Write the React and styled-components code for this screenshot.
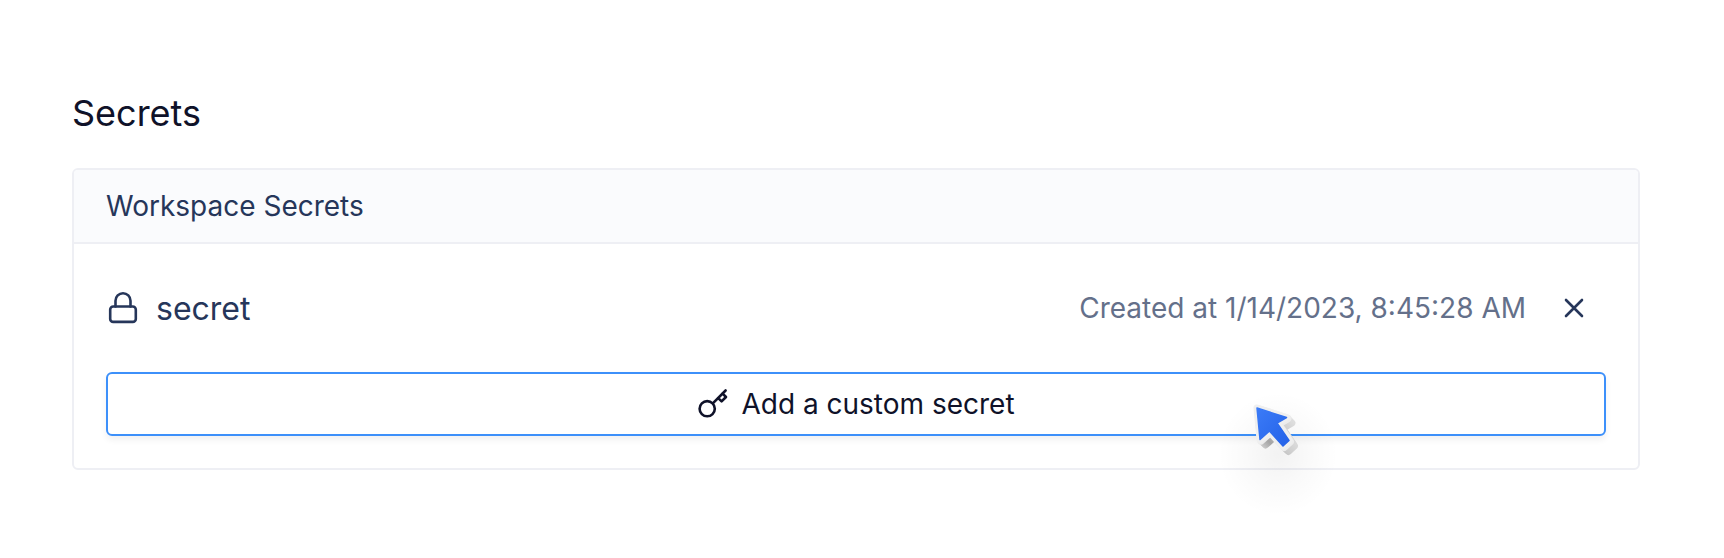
import React from 'react';
import styled, { createGlobalStyle } from 'styled-components';

const secrets = [
  {
    id: 1,
    name: 'secret',
    createdAt: '1/14/2023, 8:45:28 AM',
  },
];

const GlobalStyle = createGlobalStyle`
  * {
    box-sizing: border-box;
  }
  body {
    margin: 0;
    background: #ffffff;
    color: #26365a;
    font-family: Inter, sans-serif;
  }
`;

const Page = styled.main`
  padding: 91px 84px 88px 72px;
`;

const Title = styled.h1`
  margin: 0 0 33px;
  font-size: 36px;
  line-height: 44px;
  font-weight: 400;
  color: #0f1229;
`;

const Card = styled.section`
  border: 2px solid #eeeff4;
  border-radius: 6px;
`;

const CardHeader = styled.h2`
  margin: 0;
  padding: 20px 32px;
  border-bottom: 2px solid #eeeff4;
  border-radius: 4px 4px 0 0;
  background: #fafbfd;
  font-size: 28px;
  line-height: 32px;
  font-weight: 400;
`;

const CardBody = styled.div`
  padding: 32px;
`;

const SecretList = styled.ul`
  margin: 0 0 32px;
  padding: 0;
  list-style: none;
`;

const SecretRow = styled.li`
  display: flex;
  align-items: center;
  gap: 16px;
  height: 64px;
`;

const SecretName = styled.span`
  flex: 1;
  font-size: 32px;
`;

const CreatedAt = styled.span`
  font-size: 28px;
  color: #64708a;
`;

const RemoveButton = styled.button`
  display: flex;
  align-items: center;
  justify-content: center;
  width: 64px;
  height: 64px;
  padding: 0;
  border: 0;
  background: none;
  color: inherit;
  cursor: pointer;
`;

const ButtonWrap = styled.div`
  position: relative;
`;

const AddButton = styled.button`
  display: flex;
  align-items: center;
  justify-content: center;
  gap: 12px;
  width: 100%;
  height: 64px;
  border: 2px solid #3d90fa;
  border-radius: 6px;
  background: #ffffff;
  box-shadow: 0 4px 6px rgba(15, 18, 41, 0.06);
  color: #0f1229;
  font: 400 28px Inter, sans-serif;
  cursor: pointer;
`;

const Icon = styled.svg`
  flex: none;
  width: ${(props) => props.$size}px;
  height: ${(props) => props.$size}px;
  fill: none;
  stroke: currentColor;
  stroke-width: 2.6;
  stroke-linecap: round;
  stroke-linejoin: round;
`;

const Pointer = styled.svg`
  position: absolute;
  top: 0;
  left: 72%;
  width: 160px;
  height: 160px;
  pointer-events: none;
`;

function LockIcon() {
  return (
    <Icon $size={34} viewBox="0 0 34 34" aria-hidden="true">
      <rect x="4.2" y="15.5" width="25.6" height="15.4" rx="3" />
      <path d="M9.5 15.5V9.7a7.5 7.5 0 0 1 15 0v5.8" />
    </Icon>
  );
}

function CloseIcon() {
  return (
    <Icon $size={24} viewBox="0 0 24 24" aria-hidden="true">
      <path d="M4 4l16 16M20 4L4 20" />
    </Icon>
  );
}

function KeyIcon() {
  return (
    <Icon $size={32} viewBox="0 0 32 32" aria-hidden="true">
      <circle cx="10.2" cy="20.7" r="7.6" />
      <path d="M15.8 15.3L28.6 2.5M25.4 5.4l3.6 3.6-4.4 4.4-3.6-3.6" />
    </Icon>
  );
}

const arrow = 'M71 36L100.5 45.5 91 51 103 68.5 97 74 83.5 59 74 67.5z';

// side faces of the arrow, back to front
const depth = [
  [5.5, 5.5],
  [4.5, 4.5],
  [3.5, 3.5],
  [2.5, 2.5],
  [1.5, 1.5],
];

function MousePointer() {
  return (
    <Pointer viewBox="0 0 160 160" aria-hidden="true">
      <defs>
        <radialGradient id="pointerShadow">
          <stop offset="0" stopColor="#000" stopOpacity="0.05" />
          <stop offset="0.5" stopColor="#000" stopOpacity="0.022" />
          <stop offset="1" stopColor="#000" stopOpacity="0" />
        </radialGradient>
        <linearGradient id="pointerSide" gradientUnits="userSpaceOnUse" x1="70" y1="70" x2="110" y2="60">
          <stop offset="0" stopColor="#d6d6d6" />
          <stop offset="0.25" stopColor="#a4a4a4" />
          <stop offset="0.6" stopColor="#cacaca" />
          <stop offset="1" stopColor="#e2e2e2" />
        </linearGradient>
        <linearGradient id="pointerFace" x1="0" y1="0" x2="1" y2="1">
          <stop offset="0" stopColor="#3b7bf7" />
          <stop offset="1" stopColor="#2462e8" />
        </linearGradient>
      </defs>
      <ellipse cx="92" cy="82" rx="60" ry="62" fill="url(#pointerShadow)" />
      <g strokeLinejoin="round">
        {depth.map(([x, y]) => (
          <path
            key={x}
            d={arrow}
            transform={`translate(${x} ${y})`}
            fill="url(#pointerSide)"
            stroke="url(#pointerSide)"
            strokeWidth="7"
          />
        ))}
        <path d={arrow} transform="translate(1 1)" fill="#ececec" stroke="#ececec" strokeWidth="8" />
        <path d={arrow} fill="#efefef" stroke="#efefef" strokeWidth="7" />
        <path d={arrow} fill="url(#pointerFace)" stroke="url(#pointerFace)" strokeWidth="1.5" />
      </g>
    </Pointer>
  );
}

export default function App() {
  return (
    <>
      <GlobalStyle />
      <Page>
        <Title>Secrets</Title>
        <Card>
          <CardHeader>Workspace Secrets</CardHeader>
          <CardBody>
            <SecretList>
              {secrets.map((item) => (
                <SecretRow key={item.id}>
                  <LockIcon />
                  <SecretName>{item.name}</SecretName>
                  <CreatedAt>Created at {item.createdAt}</CreatedAt>
                  <RemoveButton type="button" aria-label={`Remove ${item.name}`}>
                    <CloseIcon />
                  </RemoveButton>
                </SecretRow>
              ))}
            </SecretList>
            <ButtonWrap>
              <AddButton type="button">
                <KeyIcon />
                Add a custom secret
              </AddButton>
              <MousePointer />
            </ButtonWrap>
          </CardBody>
        </Card>
      </Page>
    </>
  );
}
